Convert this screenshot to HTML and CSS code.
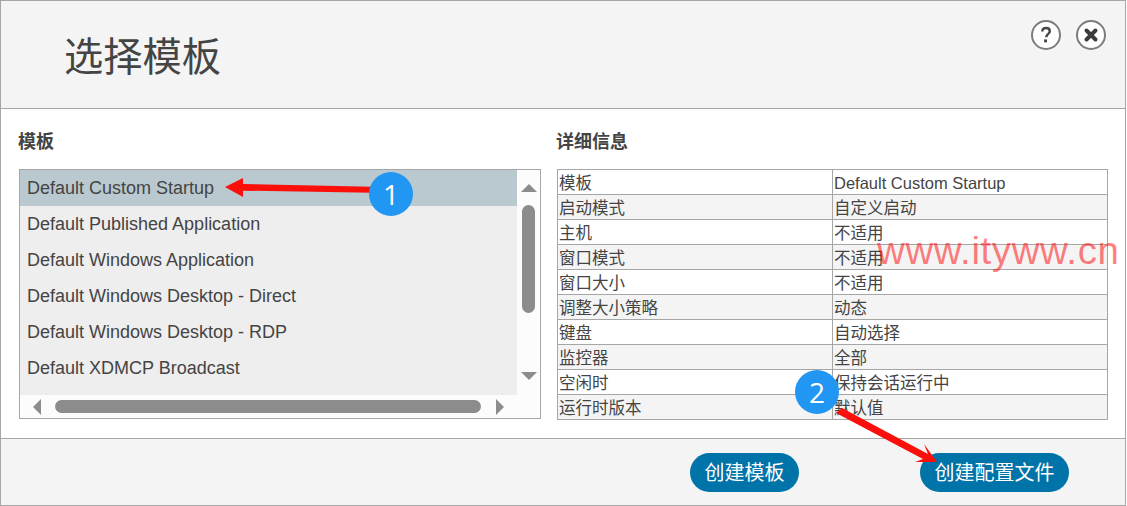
FILE: index.html
```html
<!DOCTYPE html>
<html lang="zh-CN">
<head>
<meta charset="utf-8">
<title>选择模板</title>
<link rel="stylesheet" href="styles.css">
</head>
<body>
<div class="dialog">
  <header class="head">
    <h1 class="title">选择模板</h1>
    <div class="head-icons">
      <button class="round-btn" aria-label="help"><svg viewBox="0 0 30 30" width="30" height="30"><path d="M11.3 11.6c0-2.3 1.6-3.6 3.8-3.6s3.7 1.2 3.7 3.2c0 1.6-.9 2.4-2 3.200-1 .7-1.400 1.200-1.400 2.300v.6" fill="none" stroke="#444" stroke-width="2.400"/><rect x="13.100" y="19.400" width="2.900" height="2.900" fill="#444"/></svg></button>
      <button class="round-btn" aria-label="close"><svg viewBox="0 0 30 30" width="30" height="30"><path d="M10.500 10.500l9 9M19.500 10.500l-9 9" fill="none" stroke="#3c3c3c" stroke-width="4" stroke-linecap="round"/></svg></button>
    </div>
  </header>
  <main class="body">
    <section class="col-left">
      <h2 class="label">模板</h2>
      <div class="listbox">
        <ul class="list">
          <li class="item selected">Default Custom Startup</li>
          <li class="item">Default Published Application</li>
          <li class="item">Default Windows Application</li>
          <li class="item">Default Windows Desktop - Direct</li>
          <li class="item">Default Windows Desktop - RDP</li>
          <li class="item">Default XDMCP Broadcast</li>
        </ul>
        <div class="vbar">
          <span class="tri tri-up"></span>
          <span class="vthumb"></span>
          <span class="tri tri-down"></span>
        </div>
        <div class="hbar">
          <span class="tri tri-left"></span>
          <span class="hthumb"></span>
          <span class="tri tri-right"></span>
        </div>
      </div>
    </section>
    <section class="col-right">
      <h2 class="label">详细信息</h2>
      <table class="details">
        <tr><td class="k">模板</td><td>Default Custom Startup</td></tr>
        <tr><td class="k">启动模式</td><td>自定义启动</td></tr>
        <tr><td class="k">主机</td><td>不适用</td></tr>
        <tr><td class="k">窗口模式</td><td>不适用</td></tr>
        <tr><td class="k">窗口大小</td><td>不适用</td></tr>
        <tr><td class="k">调整大小策略</td><td>动态</td></tr>
        <tr><td class="k">键盘</td><td>自动选择</td></tr>
        <tr><td class="k">监控器</td><td>全部</td></tr>
        <tr><td class="k">空闲时</td><td>保持会话运行中</td></tr>
        <tr><td class="k">运行时版本</td><td>默认值</td></tr>
      </table>
    </section>
  </main>
  <footer class="foot">
    <button class="pill">创建模板</button>
    <button class="pill">创建配置文件</button>
  </footer>
</div>
<svg class="annot" viewBox="0 0 1127 506" width="1127" height="506">
  <path d="M372 186.700L243 184L243 178L225 187L243 197L243 190.700L372 192.700Z" fill="#fa0f0a"/>
  <path d="M836 413L842 408L928 454L924 444L937 462L915 462L923 459Z" fill="#fa0f0a"/>
</svg>
<span class="badge badge-1">1</span>
<span class="badge badge-2">2</span>
<span class="watermark">www.ityww.cn</span>
</body>
</html>
```

FILE: styles.css
```css
* { box-sizing: border-box; }
html, body { margin: 0; padding: 0; }
body {
  width: 1127px;
  height: 506px;
  overflow: hidden;
  background: #fff;
  position: relative;
  font-family: "Liberation Sans", "Noto Sans CJK SC", sans-serif;
  color: #444;
}
.dialog {
  width: 1126px;
  height: 506px;
  border: 1px solid #a6a6a6;
  display: flex;
  flex-direction: column;
}
.head {
  height: 108px;
  flex: none;
  background: #f4f4f4;
  border-bottom: 1px solid #a6a6a6;
  display: flex;
  justify-content: space-between;
  align-items: flex-start;
  padding: 19px 19px 0 63px;
}
.title {
  margin: 12px 0 0;
  font-size: 39.250px;
  line-height: 50px;
  font-weight: 400;
  color: #444;
}
.head-icons { display: flex; gap: 15px; }
.round-btn {
  width: 30px;
  height: 30px;
  padding: 0;
  border: 2px solid #7c7c7c;
  border-radius: 50%;
  background: #fff;
  display: flex;
  align-items: center;
  justify-content: center;
}
.round-btn svg { flex: none; }
.body {
  height: 329px;
  flex: none;
  display: flex;
  gap: 16px;
  padding: 0 0 0 18px;
  background: #fff;
}
.col-left { width: 522px; flex: none; }
.col-right { width: 551px; flex: none; }
.label {
  margin: 0 0 0 -1px;
  height: 60px;
  padding-top: 20px;
  font-size: 18px;
  line-height: 26px;
  font-weight: 700;
  color: #444;
}
.listbox {
  height: 250px;
  border: 1px solid #a6a6a6;
  display: grid;
  grid-template-columns: 497px 1fr;
  grid-template-rows: 225px 1fr;
  background: #fcfcfc;
}
.list {
  margin: 0;
  padding: 0;
  list-style: none;
  background: #eee;
}
.item {
  height: 36px;
  line-height: 36px;
  padding-left: 7px;
  font-size: 18px;
  color: #444;
  white-space: nowrap;
}
.selected { background: #b9c9cf; }
.vbar {
  display: flex;
  flex-direction: column;
  align-items: center;
  padding-top: 14px;
}
.vthumb {
  width: 13px;
  height: 108px;
  margin-top: 13px;
  margin-bottom: 59px;
  border-radius: 7px;
  background: #8c8c8c;
}
.hbar {
  grid-column: 1 / span 2;
  display: flex;
  align-items: center;
  padding: 0 0 0 13px;
}
.hthumb {
  width: 426px;
  height: 13px;
  margin: 0 15px 0 14px;
  border-radius: 7px;
  background: #8c8c8c;
}
.tri { display: block; width: 0; height: 0; flex: none; }
.tri-up { border-left: 8px solid transparent; border-right: 8px solid transparent; border-bottom: 8px solid #8c8c8c; }
.tri-down { border-left: 8px solid transparent; border-right: 8px solid transparent; border-top: 8px solid #8c8c8c; }
.tri-left { border-top: 8px solid transparent; border-bottom: 8px solid transparent; border-right: 8px solid #8c8c8c; }
.tri-right { border-top: 8px solid transparent; border-bottom: 8px solid transparent; border-left: 8px solid #8c8c8c; }
.details {
  width: 551px;
  height: 251px;
  border-collapse: collapse;
  table-layout: fixed;
  font-size: 16.500px;
  color: #444;
}
.details td {
  border: 1px solid #a6a6a6;
  padding: 2px 0 0 1px;
  height: 25px;
  line-height: 22px;
  white-space: nowrap;
  overflow: hidden;
}
.details td.k { width: 275px; }
.details tr:nth-child(even) { background: #f4f4f4; }
.foot {
  flex: 1;
  background: #f4f4f4;
  border-top: 1px solid #a6a6a6;
  display: flex;
  justify-content: flex-end;
  align-items: flex-start;
  gap: 121px;
  padding: 14px 56px 0 0;
}
.pill {
  height: 39px;
  padding: 1px 14.500px 0;
  border: 0;
  border-radius: 20px;
  background: #0073a8;
  color: #fff;
  font-family: inherit;
  font-size: 20px;
  line-height: 38px;
  white-space: nowrap;
}
.annot { position: absolute; left: 0; top: 0; pointer-events: none; }
.badge {
  position: absolute;
  width: 44px;
  height: 44px;
  border-radius: 50%;
  background: #2196f3;
  color: #fff;
  font-family: "Open Sans", sans-serif;
  font-size: 28px;
  line-height: 44px;
  text-align: center;
}
.badge-1 { left: 369px; top: 172px; }
.badge-2 { left: 795px; top: 370px; }
.watermark {
  position: absolute;
  left: 877px;
  top: 229px;
  font-family: "Liberation Sans", sans-serif;
  font-size: 38.500px;
  line-height: 44px;
  letter-spacing: 0.600px;
  color: rgba(255, 0, 0, 0.5);
  white-space: nowrap;
}
```
